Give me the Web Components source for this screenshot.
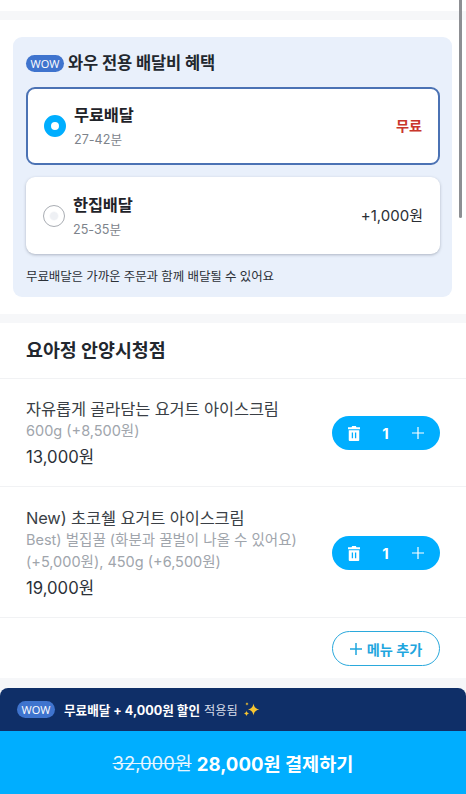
<!DOCTYPE html>
<html lang="ko">
<head>
<meta charset="utf-8">
<title>주문</title>
<style>
  html, body { margin: 0; padding: 0; background: #fff; }
  body {
    width: 466px;
    height: 794px;
    overflow: hidden;
    position: relative;
    font-family: Inter, "Noto Sans CJK KR", sans-serif;
    color: #22272e;
  }
  .page { display: flex; flex-direction: column; height: 794px; }
  .grow { flex: 1; min-height: 0; }
</style>
</head>
<body>
<div class="page">
  <gray-band top="11" height="9"></gray-band>
  <delivery-panel>
    <delivery-option selected name="무료배달" time="27-42분" price="무료"></delivery-option>
    <delivery-option name="한집배달" time="25-35분" price="+1,000원"></delivery-option>
  </delivery-panel>
  <gray-band top="17" height="9"></gray-band>
  <store-title>요아정 안양시청점</store-title>
  <cart-item height="108" shift="1" price="13,000원">
    <span slot="name">자유롭게 골라담는 요거트 아이스크림</span>
    <span>600g (+8,500원)</span>
  </cart-item>
  <cart-item height="131" shift="2" price="19,000원">
    <span slot="name">New) 초코쉘 요거트 아이스크림</span>
    <span>Best) 벌집꿀 (화분과 꿀벌이 나올 수 있어요)<br>(+5,000원), 450g (+6,500원)</span>
  </cart-item>
  <add-menu></add-menu>
  <div class="grow"></div>
  <checkout-bar></checkout-bar>
</div>
<page-scrollbar></page-scrollbar>

<script>
(function () {
'use strict';

function shadow(el, html) {
    el.attachShadow({ mode: 'open' }).innerHTML = html;
}

class GrayBand extends HTMLElement {
    connectedCallback() {
        shadow(this, `<style>
            :host { display: block; background: #f6f7f9; }
        </style>`);
        this.style.marginTop = this.getAttribute('top') + 'px';
        this.style.height = this.getAttribute('height') + 'px';
    }
}

class WowBadge extends HTMLElement {
    connectedCallback() {
        shadow(this, `<style>
            :host {
                display: inline-flex; align-items: center; justify-content: center;
                width: 38px; height: 17px; border-radius: 9px;
                background: #3f74ce; color: #fff;
                font: 500 11px/17px "Open Sans", Inter, sans-serif;
                letter-spacing: 0;
            }
        </style>WOW`);
    }
}

class DeliveryPanel extends HTMLElement {
    connectedCallback() {
        shadow(this, `<style>
            :host {
                display: block; margin: 17px 14px 0 13px; height: 260px; box-sizing: border-box;
                padding: 16px 12px 0 13px; background: #e9f0fb; border-radius: 9px;
            }
            .head { display: flex; align-items: center; gap: 4px; height: 20px; margin-bottom: 14px; margin-top: 0; }
            .head b { font-size: 16.5px; font-weight: 700; line-height: 20px; color: #22272e; letter-spacing: -.1px; }
            .list { display: flex; flex-direction: column; gap: 12px; }
            p { margin: 14px 0 0; font-size: 12.5px; line-height: 18px; color: #2c3138; letter-spacing: -.12px; }
        </style>
        <div class="head"><wow-badge></wow-badge><b>와우 전용 배달비 혜택</b></div>
        <div class="list"><slot></slot></div>
        <p>무료배달은 가까운 주문과 함께 배달될 수 있어요</p>`);
    }
}

class DeliveryOption extends HTMLElement {
    connectedCallback() {
        let on = this.hasAttribute('selected');
        shadow(this, `<style>
            :host {
                display: flex; align-items: center; height: 78px; box-sizing: border-box;
                padding: 0 17px 0 17px; background: #fff; border-radius: 9px;
            }
            :host([selected]) { border: 2px solid #4b72b4; padding: 0 16px 0 16px; }
            :host(:not([selected])) { box-shadow: 0 1px 3px rgba(60, 70, 90, .35); height: 77px; }
            .radio { width: 22px; height: 22px; box-sizing: border-box; border-radius: 50%; flex: none; margin-right: 8px; }
            .radio.on { border: 7px solid #00aeff; background: #fff; }
            .radio.off { border: 1px solid #a9adb3; background: radial-gradient(circle, #eef0f4 0 3.5px, #fff 5px); }
            .txt { flex: 1; display: flex; flex-direction: column; margin-top: -1px; }
            :host(:not([selected])) .txt { margin-top: 0; }
            .name { font-size: 16.4px; font-weight: 700; line-height: 24px; color: #1f2329; letter-spacing: -.2px; }
            .time { font-size: 12.6px; line-height: 18px; margin-top: 4px; color: #7d838b; }
            .price { font-size: 15px; line-height: 20px; color: #2a2e34; }
            .price.free { font-weight: 700; font-size: 14.2px; color: #c9362b; }
        </style>
        <div class="radio ${on ? 'on' : 'off'}"></div>
        <div class="txt">
            <div class="name">${this.getAttribute('name')}</div>
            <div class="time">${this.getAttribute('time')}</div>
        </div>
        <div class="price ${on ? 'free' : ''}">${this.getAttribute('price')}</div>`);
    }
}

class StoreTitle extends HTMLElement {
    connectedCallback() {
        shadow(this, `<style>
            :host {
                display: block; height: 56px; box-sizing: border-box; padding: 15px 26px 0;
                font-size: 18.4px; font-weight: 700; line-height: 24px; color: #22272e;
                border-bottom: 1px solid #f1f2f4;
            }
        </style><slot></slot>`);
    }
}

class CartItem extends HTMLElement {
    connectedCallback() {
        shadow(this, `<style>
            :host {
                display: flex; align-items: center; box-sizing: border-box; padding: 0 26px;
                border-bottom: 1px solid #f1f2f4;
            }
            .info { flex: 1; min-width: 0; margin-top: 1px; }
            .name { font-size: 16.4px; line-height: 22px; color: #3a3f46; letter-spacing: -.12px; }
            .opt { font-size: 14.5px; line-height: 22px; color: #a0a5ac; }
            .price { font-size: 16.7px; line-height: 22px; color: #2c3138; margin-top: 4px; }
            qty-stepper { margin-top: var(--shift); }
        </style>
        <div class="info">
            <div class="name"><slot name="name"></slot></div>
            <div class="opt"><slot></slot></div>
            <div class="price">${this.getAttribute('price')}</div>
        </div>
        <qty-stepper></qty-stepper>`);
        this.style.height = this.getAttribute('height') + 'px';
        this.style.setProperty('--shift', this.getAttribute('shift') + 'px');
    }
}

class QtyStepper extends HTMLElement {
    connectedCallback() {
        shadow(this, `<style>
            :host {
                display: flex; align-items: center; flex: none; width: 108px; height: 34px;
                box-sizing: border-box; padding: 0 16px 0 15px; justify-content: space-between;
                border-radius: 17px; background: #00aeff; color: #fff;
                font-size: 15px; font-weight: 700;
            }
            svg { display: block; }
            span { margin-right: 2px; }
        </style>
        <svg width="14" height="15" viewBox="0 0 14 16">
            <path fill="#fff" d="M5 0h4l.6 1.3H13.400V3.400H.6V1.300H4.400zM1.400 4.400h11.200V15a1 1 0 0 1-1 1H2.400a1 1 0 0 1-1-1z"/>
            <path fill="#00aeff" d="M4.600 7h1.400v6H4.600zM8 7h1.400v6H8z"/>
        </svg>
        <span>1</span>
        <svg width="12" height="12" viewBox="0 0 12 12"><path stroke="#fff" stroke-width="1.2" d="M6 0v12M0 6h12"/></svg>`);
    }
}

class AddMenu extends HTMLElement {
    connectedCallback() {
        shadow(this, `<style>
            :host { display: flex; justify-content: flex-end; padding: 13px 26px 0; }
            div {
                display: flex; align-items: center; justify-content: center; gap: 5px;
                width: 108px; height: 35px; box-sizing: border-box;
                border: 1px solid #2ba9dc; border-radius: 18px; background: #fff;
                color: #1fa6de; font-size: 14.2px; font-weight: 700;
            }
            svg { display: block; }
        </style>
        <div>
            <svg width="12" height="12" viewBox="0 0 12 12"><path stroke="#1fa6de" stroke-width="1.5" d="M6 0v12M0 6h12"/></svg>
            메뉴 추가
        </div>`);
    }
}

class CheckoutBar extends HTMLElement {
    connectedCallback() {
        shadow(this, `<style>
            :host { display: block; background: #f6f7f9; padding-top: 10px; }
            .promo {
                display: flex; align-items: center; height: 43px; box-sizing: border-box; padding: 0 0 0 17px;
                background: #0f2f68; border-radius: 8px 8px 0 0; color: #fff; font-size: 12.6px;
            }
            .promo b { font-weight: 700; margin-left: 9px; }
            .promo span { margin-left: 4px; font-size: 12.2px; color: #d9dee8; }
            .promo svg { margin-left: 5px; display: block; }
            .pay {
                display: flex; align-items: center; justify-content: center; gap: 5px; height: 63px;
                background: #00aeff; color: #fff; padding-bottom: 1px; box-sizing: border-box;
            }
            .pay s { font-size: 18.4px; font-weight: 400; color: #e4f5ff; }
            .pay b { font-size: 18.6px; font-weight: 700; }
        </style>
        <div class="promo">
            <wow-badge></wow-badge>
            <b>무료배달 + 4,000원 할인</b>
            <span>적용됨</span>
            <svg width="17" height="15" viewBox="0 0 17 15">
                <path fill="#f7c531" d="M10.5 1.5c.6 3.6 2 5.2 5.8 6-3.8.8-5.2 2.4-5.8 6-.6-3.6-2-5.2-5.8-6 3.8-.8 5.2-2.4 5.8-6z"/>
                <path fill="#f7c531" d="M3.5 8.5c.3 1.8.9 2.5 2.7 2.9-1.8.4-2.4 1.1-2.7 2.9-.3-1.8-.9-2.5-2.7-2.9 1.8-.4 2.4-1.1 2.7-2.9zM4 0c.2 1.2.6 1.7 1.7 1.9C4.6 2.100 4.200 2.600 4 3.800c-.2-1.200-.6-1.700-1.700-1.900C3.400 1.700 3.800 1.200 4 0z"/>
            </svg>
        </div>
        <div class="pay"><s>32,000원</s><b>28,000원 결제하기</b></div>`);
    }
}

class PageScrollbar extends HTMLElement {
    connectedCallback() {
        shadow(this, `<style>
            :host {
                position: absolute; left: 459px; top: 0; width: 3px; height: 218px;
                background: #8d8f93; border-radius: 0 0 2px 2px;
            }
        </style>`);
    }
}

customElements.define('gray-band', GrayBand);
customElements.define('wow-badge', WowBadge);
customElements.define('delivery-panel', DeliveryPanel);
customElements.define('delivery-option', DeliveryOption);
customElements.define('store-title', StoreTitle);
customElements.define('cart-item', CartItem);
customElements.define('qty-stepper', QtyStepper);
customElements.define('add-menu', AddMenu);
customElements.define('checkout-bar', CheckoutBar);
customElements.define('page-scrollbar', PageScrollbar);
}());
</script>
</body>
</html>
